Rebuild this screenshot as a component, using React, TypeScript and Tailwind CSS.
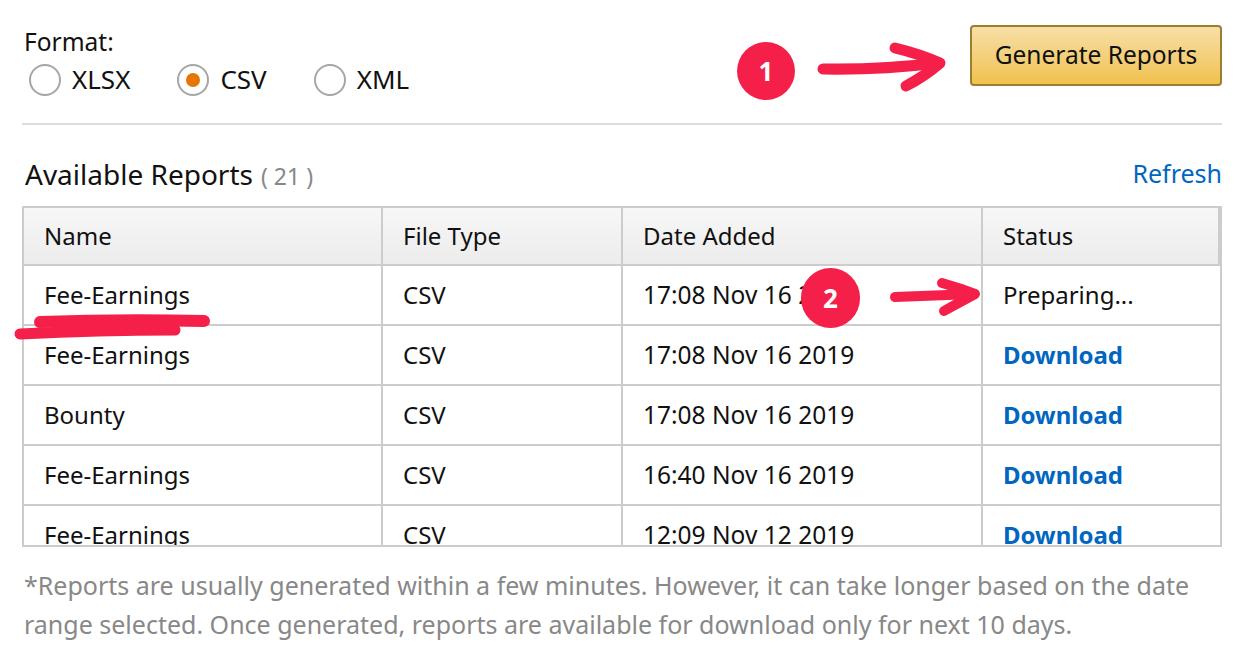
import React from "react";

const rows = [
  { name: "Fee-Earnings", type: "CSV", date: "17:08 Nov 16 2019", status: "Preparing..." },
  { name: "Fee-Earnings", type: "CSV", date: "17:08 Nov 16 2019", status: "Download" },
  { name: "Bounty", type: "CSV", date: "17:08 Nov 16 2019", status: "Download" },
  { name: "Fee-Earnings", type: "CSV", date: "16:40 Nov 16 2019", status: "Download" },
  { name: "Fee-Earnings", type: "CSV", date: "12:09 Nov 12 2019", status: "Download" },
];

function Radio({ label, checked }: { label: string; checked?: boolean }) {
  return (
    <label className="flex items-center gap-[11px]">
      <span className="w-[32px] h-[32px] rounded-full border-2 border-[#a6a6a6] flex items-center justify-center bg-white">
        {checked && <span className="w-[14px] h-[14px] rounded-full bg-[#e77600]" />}
      </span>
      <span className="text-[26px] text-[#111]">{label}</span>
    </label>
  );
}

export default function App() {
  return (
    <div
      className="relative w-[1252px] h-[672px] bg-white overflow-hidden text-[#111]"
      style={{ fontFamily: '"Noto Sans", "Open Sans", sans-serif' }}
    >
      <div className="px-[22px] w-[1244px]">
        <div className="flex justify-between pt-[25px]">
          <div className="pl-[2px]">
            <div className="text-[24.5px] leading-[30px] mt-[2px]">Format:</div>
            <div className="flex gap-[47px] mt-[3px] pl-[5px]">
              <Radio label="XLSX" />
              <Radio label="CSV" checked />
              <Radio label="XML" />
            </div>
          </div>
          <button className="w-[252px] h-[61px] rounded-[4px] border-2 border-[#9c7e31] bg-gradient-to-b from-[#f7dfa5] to-[#f0c14b] text-[24.5px] text-[#111]">
            Generate Reports
          </button>
        </div>
        <div className="h-[2px] bg-[#dddddd] mt-[24px]" />
        <div className="flex justify-between items-center mt-[28px] pl-[3px]">
          <div className="flex items-baseline">
            <span className="text-[28px]">Available Reports</span>
            <span className="text-[23px] text-[#888] ml-[8px]">( 21 )</span>
          </div>
          <span className="text-[25px] text-[#0066c0]">Refresh</span>
        </div>
        <div className="mt-[11px] h-[341px] overflow-hidden border-2 border-[#cccccc] border-b-0 relative">
          <div className="grid grid-cols-[359px_240px_360px_237px] h-[58px] bg-gradient-to-b from-[#f7f7f7] to-[#ececec] border-b-2 border-[#cccccc] border-r-2">
            {["Name", "File Type", "Date Added", "Status"].map((h, i) => (
              <div
                key={h}
                className={`flex items-center pl-[20px] text-[24px] ${i < 3 ? "border-r-2 border-[#cccccc]" : ""}`}
              >
                {h}
              </div>
            ))}
          </div>
          {rows.map((r, idx) => (
            <div key={idx} className="grid grid-cols-[359px_240px_360px_237px] h-[60px] border-b-2 border-[#cccccc]">
              <div className="flex items-center pl-[20px] text-[24px] border-r-2 border-[#cccccc]">{r.name}</div>
              <div className="flex items-center pl-[20px] text-[24px] border-r-2 border-[#cccccc]">{r.type}</div>
              <div className="flex items-center pl-[20px] text-[24.5px] border-r-2 border-[#cccccc]">{r.date}</div>
              <div
                className={`flex items-center pl-[20px] text-[24px] ${
                  r.status === "Download" ? "text-[#0066c0] font-bold" : ""
                }`}
              >
                {r.status}
              </div>
            </div>
          ))}
          <div className="absolute bottom-0 left-0 right-0 h-[2px] bg-[#cccccc]" />
        </div>
        <p className="text-[25px] leading-[39px] text-[#888] mt-[19px] pl-[2px] whitespace-nowrap">
          *Reports are usually generated within a few minutes. However, it can take longer based on the date
          <br />
          range selected. Once generated, reports are available for download only for next 10 days.
        </p>
      </div>

      {/* annotations */}
      <div className="absolute left-[737px] top-[42px] w-[58px] h-[58px] rounded-full bg-[#f5204a] flex items-center justify-center text-white text-[26px] font-bold">
        1
      </div>
      <div className="absolute left-[801px] top-[268px] w-[59px] h-[60px] rounded-full bg-[#f5204a] flex items-center justify-center text-white text-[26px] font-bold">
        2
      </div>
      <svg className="absolute left-0 top-0 pointer-events-none" width="1252" height="672">
        <g fill="none" stroke="#f5204a" strokeLinecap="round" strokeLinejoin="round">
          <path d="M823 69 Q880 70 938 63" strokeWidth="11" />
          <path d="M895 48 Q920 54 940 63 Q925 76 906 86" strokeWidth="11" />
          <path d="M895 297 L974 294" strokeWidth="10" />
          <path d="M942 283 Q960 288 975 294 Q960 302 944 311" strokeWidth="10" />
          <path d="M40 322 Q120 319 204 321" strokeWidth="12" />
          <path d="M20 334 Q100 330 175 330" strokeWidth="11" />
        </g>
      </svg>
    </div>
  );
}
